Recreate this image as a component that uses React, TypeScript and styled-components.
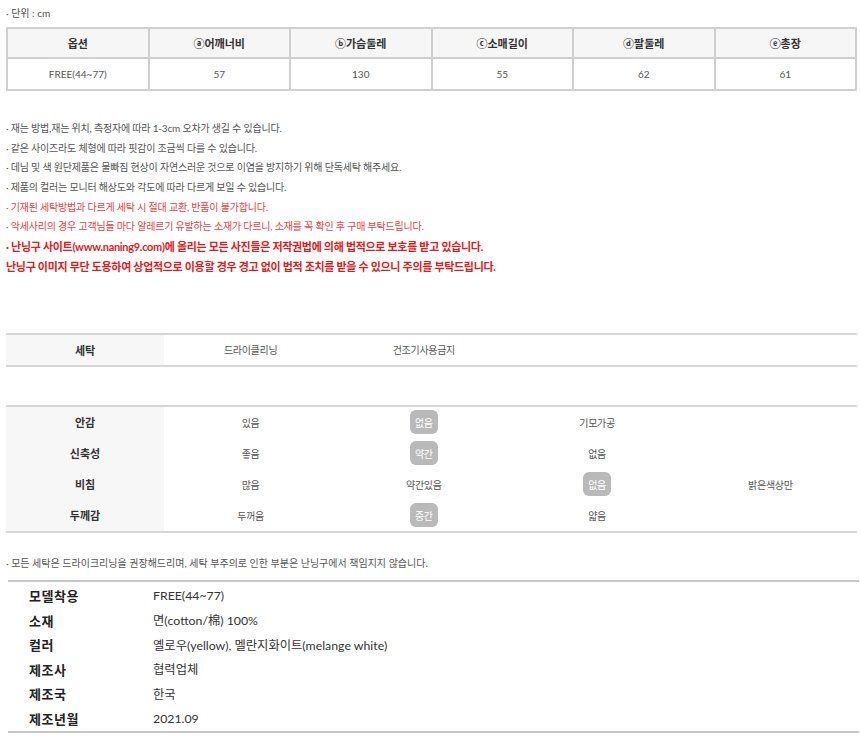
import React from 'react';
import styled, { createGlobalStyle } from 'styled-components';

const GlobalStyle = createGlobalStyle`
  body {
    margin: 0;
    background: #ffffff;
    font-family: Lato, "Noto Sans CJK KR", sans-serif;
    color: #555555;
  }
`;

const Page = styled.div`
  width: 860px;
  padding-top: 6px;
`;

const UnitText = styled.div`
  margin-left: 6px;
  font-size: 10px;
  line-height: 14px;
  color: #555555;
`;

const SizeTable = styled.table`
  margin: 7px 0 0 6px;
  width: 851px;
  border-collapse: collapse;
  table-layout: fixed;
  border: 2px solid #d0d0d0;
`;

const SizeHead = styled.th`
  height: 28px;
  padding: 0;
  border: 2px solid #d0d0d0;
  background: #f6f6f6;
  font-size: 11px;
  font-weight: 700;
  color: #333333;
`;

const SizeCell = styled.td`
  height: 30px;
  padding: 0;
  border: 2px solid #d0d0d0;
  text-align: center;
  font-size: 10px;
  color: #555555;
`;

const Notes = styled.ul`
  list-style: none;
  margin: 28px 0 0 6px;
  padding: 0;
`;

const Note = styled.li<{ $tone?: 'red' | 'strong' }>`
  height: 19.7px;
  line-height: 19.7px;
  white-space: nowrap;
  letter-spacing: ${(p) => (p.$tone === 'strong' ? '-0.3px' : '-0.2px')};
  font-size: ${(p) => (p.$tone === 'strong' ? '11px' : '10px')};
  font-weight: ${(p) => (p.$tone === 'strong' ? 700 : 400)};
  color: ${(p) => (p.$tone === 'strong' ? '#e01b1b' : p.$tone === 'red' ? '#ea4040' : '#555555')};
`;

const GridTable = styled.div<{ $top: number }>`
  margin: ${(p) => p.$top}px 0 0 6px;
  width: 851px;
  display: grid;
  grid-template-columns: 158px repeat(4, 1fr);
  border-top: 2px solid #d6d6d6;
  border-bottom: 2px solid #d6d6d6;
`;

const RowLabel = styled.div<{ $h: number }>`
  height: ${(p) => p.$h}px;
  display: flex;
  align-items: center;
  justify-content: center;
  background: #f7f7f7;
  font-size: 11px;
  font-weight: 700;
  color: #333333;
`;

const RowValue = styled.div<{ $h: number }>`
  height: ${(p) => p.$h}px;
  display: flex;
  align-items: center;
  justify-content: center;
  font-size: 10px;
  color: #555555;
  letter-spacing: -0.3px;
`;

const Pill = styled.span`
  display: inline-flex;
  align-items: center;
  justify-content: center;
  height: 24px;
  padding: 0 5px;
  border-radius: 6px;
  background: #b9b9b9;
  color: #ffffff;
`;

const FootNote = styled.div`
  margin: 23px 0 0 6px;
  font-size: 10px;
  line-height: 14px;
  color: #555555;
`;

const InfoTable = styled.div`
  margin: 10px 0 0 8px;
  width: 851px;
  padding: 2px 0 0;
  border-top: 2px solid #c6c6c6;
  border-bottom: 2px solid #c6c6c6;
  display: grid;
  grid-template-columns: 145px 1fr;
  grid-auto-rows: 24.5px;
  align-items: center;
`;

const InfoLabel = styled.div`
  padding-left: 21px;
  font-size: 13px;
  font-weight: 700;
  color: #222222;
  letter-spacing: 0.5px;
`;

const InfoValue = styled.div`
  font-size: 12.3px;
  color: #333333;
`;

const sizeHeads = ['옵션', 'ⓐ어깨너비', 'ⓑ가슴둘레', 'ⓒ소매길이', 'ⓓ팔둘레', 'ⓔ총장'];
const sizeRow = ['FREE(44~77)', '57', '130', '55', '62', '61'];

const notes: { text: string; tone?: 'red' | 'strong' }[] = [
  { text: '· 재는 방법,재는 위치, 측정자에 따라 1-3cm 오차가 생길 수 있습니다.' },
  { text: '· 같은 사이즈라도 체형에 따라 핏감이 조금씩 다를 수 있습니다.' },
  { text: '· 데님 및 색 원단제품은 물빠짐 현상이 자연스러운 것으로 이염을 방지하기 위해 단독세탁 해주세요.' },
  { text: '· 제품의 컬러는 모니터 해상도와 각도에 따라 다르게 보일 수 있습니다.' },
  { text: '· 기재된 세탁방법과 다르게 세탁 시 절대 교환, 반품이 불가합니다.', tone: 'red' },
  { text: '· 악세사리의 경우 고객님들 마다 알레르기 유발하는 소재가 다르니, 소재를 꼭 확인 후 구매 부탁드립니다.', tone: 'red' },
  { text: '· 난닝구 사이트(www.naning9.com)에 올리는 모든 사진들은 저작권법에 의해 법적으로 보호를 받고 있습니다.', tone: 'strong' },
  { text: '난닝구 이미지 무단 도용하여 상업적으로 이용할 경우 경고 없이 법적 조치를 받을 수 있으니 주의를 부탁드립니다.', tone: 'strong' },
];

// each value: [text, selected]
const fabricRows: { label: string; values: [string, boolean][] }[] = [
  { label: '안감', values: [['있음', false], ['없음', true], ['기모가공', false], ['', false]] },
  { label: '신축성', values: [['좋음', false], ['약간', true], ['없음', false], ['', false]] },
  { label: '비침', values: [['많음', false], ['약간있음', false], ['없음', true], ['밝은색상만', false]] },
  { label: '두께감', values: [['두꺼움', false], ['중간', true], ['얇음', false], ['', false]] },
];

const info = [
  ['모델착용', 'FREE(44~77)'],
  ['소재', '면(cotton/棉) 100%'],
  ['컬러', '옐로우(yellow), 멜란지화이트(melange white)'],
  ['제조사', '협력업체'],
  ['제조국', '한국'],
  ['제조년월', '2021.09'],
];

export default function App() {
  return (
    <Page>
      <GlobalStyle />
      <UnitText>· 단위 : cm</UnitText>

      <SizeTable>
        <thead>
          <tr>
            {sizeHeads.map((h) => (
              <SizeHead key={h}>{h}</SizeHead>
            ))}
          </tr>
        </thead>
        <tbody>
          <tr>
            {sizeRow.map((v, i) => (
              <SizeCell key={i}>{v}</SizeCell>
            ))}
          </tr>
        </tbody>
      </SizeTable>

      <Notes>
        {notes.map((n, i) => (
          <Note key={i} $tone={n.tone}>
            {n.text}
          </Note>
        ))}
      </Notes>

      <GridTable $top={56}>
        <RowLabel $h={30}>세탁</RowLabel>
        <RowValue $h={30}>드라이클리닝</RowValue>
        <RowValue $h={30}>건조기사용금지</RowValue>
        <RowValue $h={30} />
        <RowValue $h={30} />
      </GridTable>

      <GridTable $top={38}>
        {fabricRows.map((row) => (
          <React.Fragment key={row.label}>
            <RowLabel $h={31}>{row.label}</RowLabel>
            {row.values.map(([text, on], i) => (
              <RowValue $h={31} key={i}>
                {on ? <Pill>{text}</Pill> : text}
              </RowValue>
            ))}
          </React.Fragment>
        ))}
      </GridTable>

      <FootNote>· 모든 세탁은 드라이크리닝을 권장해드리며, 세탁 부주의로 인한 부분은 난닝구에서 책임지지 않습니다.</FootNote>

      <InfoTable>
        {info.map(([k, v]) => (
          <React.Fragment key={k}>
            <InfoLabel>{k}</InfoLabel>
            <InfoValue>{v}</InfoValue>
          </React.Fragment>
        ))}
      </InfoTable>
    </Page>
  );
}
